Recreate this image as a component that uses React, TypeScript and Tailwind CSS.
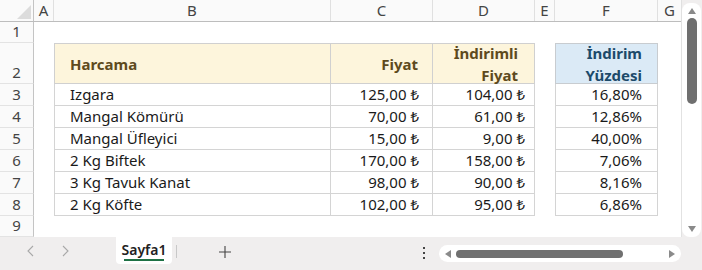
import React from 'react'

const font = { fontFamily: '"Noto Sans", "Open Sans", sans-serif' }

const rows = [
  ['Izgara', '125,00 ₺', '104,00 ₺', '16,80%'],
  ['Mangal Kömürü', '70,00 ₺', '61,00 ₺', '12,86%'],
  ['Mangal Üfleyici', '15,00 ₺', '9,00 ₺', '40,00%'],
  ['2 Kg Biftek', '170,00 ₺', '158,00 ₺', '7,06%'],
  ['3 Kg Tavuk Kanat', '98,00 ₺', '90,00 ₺', '8,16%'],
  ['2 Kg Köfte', '102,00 ₺', '95,00 ₺', '6,86%'],
]

function RowHead({ n, h }: { n: number; h: string }) {
  return (
    <div className={`${h} w-[34px] shrink-0 flex items-end justify-center pb-[1px] border-r border-b border-r-[#c4c4c4] border-b-[#e3e3e3] bg-[#fafafa] text-[#444] text-[15px] leading-[20px]`}>
      {n}
    </div>
  )
}

function ColHead() {
  const cols: [string, string][] = [
    ['A', 'w-[20px]'],
    ['B', 'w-[277px]'],
    ['C', 'w-[102px]'],
    ['D', 'w-[102px]'],
    ['E', 'w-[20px]'],
    ['F', 'w-[103px]'],
    ['G', 'w-[24px]'],
  ]
  return (
    <div className="flex h-[22px] border-b border-[#bdbdbd] bg-[#fafafa]">
      <div className="w-[34px] shrink-0 border-r border-[#c4c4c4] relative">
        <svg width="34" height="21" className="absolute left-0 top-0">
          <polygon points="31,5 31,19 17,19" fill="#dcdcdc" />
        </svg>
      </div>
      {cols.map(([l, w]) => (
        <div key={l} className={`${w} shrink-0 border-r border-[#e0e0e0] flex items-center justify-center text-[15px] text-[#444]`}>
          {l}
        </div>
      ))}
    </div>
  )
}

export default function App() {
  return (
    <div className="w-[702px] h-[270px] bg-[#f0eeee] flex flex-col overflow-hidden" style={font}>
      <div className="flex h-[237px]">
        {/* Grid */}
        <div className="w-[682px] bg-white flex flex-col border-r border-[#e2e2e2]">
          <ColHead />
          {/* Row 1 */}
          <div className="flex h-[21px]">
            <RowHead n={1} h="h-[21px]" />
          </div>
          {/* Row 2 header */}
          <div className="flex h-[41px]">
            <RowHead n={2} h="h-[41px]" />
            <div className="w-[20px] shrink-0" />
            <div className="w-[277px] shrink-0 border border-[#d0d0d0] bg-[#fdf5dc] flex items-center pl-[15px] pt-[1px] font-bold text-[15px] text-[#5e4a1d]">
              Harcama
            </div>
            <div className="w-[102px] shrink-0 border-y border-r border-[#d0d0d0] bg-[#fdf5dc] flex items-center justify-end pr-[14px] pt-[1px] font-bold text-[15px] text-[#5e4a1d]">
              Fiyat
            </div>
            <div className="w-[102px] shrink-0 border-y border-r border-[#d0d0d0] bg-[#fdf5dc] flex flex-col items-end justify-center pr-[16px] pt-[1px] font-bold text-[15px] leading-[22px] text-[#5e4a1d]">
              <span>İndirimli</span>
              <span>Fiyat</span>
            </div>
            <div className="w-[20px] shrink-0" />
            <div className="w-[103px] shrink-0 border border-[#c8ccd0] bg-[#dbeaf6] flex flex-col items-end justify-center pr-[15px] pt-[1px] font-bold text-[15px] leading-[22px] text-[#1d4a6a]">
              <span>İndirim</span>
              <span>Yüzdesi</span>
            </div>
          </div>
          {rows.map((r, i) => (
            <div key={i} className="flex h-[22px] text-[15px] text-[#1a1a1a]">
              <RowHead n={i + 3} h="h-[22px]" />
              <div className="w-[20px] shrink-0" />
              <div className="w-[277px] shrink-0 border-x border-b border-[#d4d4d4] flex items-center pl-[15px]">{r[0]}</div>
              <div className="w-[102px] shrink-0 border-r border-b border-[#d4d4d4] flex items-center justify-end pr-[13px]">{r[1]}</div>
              <div className="w-[102px] shrink-0 border-r border-b border-[#d4d4d4] flex items-center justify-end pr-[9px]">{r[2]}</div>
              <div className="w-[20px] shrink-0" />
              <div className="w-[103px] shrink-0 border-x border-b border-[#d4d4d4] flex items-center justify-end pr-[15px]">{r[3]}</div>
            </div>
          ))}
          {/* Row 9 */}
          <div className="flex h-[21px]">
            <RowHead n={9} h="h-[21px]" />
          </div>
        </div>
        {/* Vertical scrollbar */}
        <div className="w-[20px] pt-[3px] pr-[1px]">
          <div className="h-full bg-white rounded-[8px] flex flex-col items-center">
            <svg width="10" height="8" className="mt-[4px]">
              <polygon points="5,1 9,7 1,7" fill="#8a8a8a" />
            </svg>
            <div className="w-[10px] h-[86px] mt-[3px] rounded-full bg-[#6f6f6f]" />
            <div className="flex-1" />
            <svg width="10" height="8" className="mb-[4px]">
              <polygon points="1,1 9,1 5,7" fill="#8a8a8a" />
            </svg>
          </div>
        </div>
      </div>
      {/* Tab bar */}
      <div className="h-[33px] flex items-start">
        <div className="w-[116px] h-[27px] flex items-center">
          <span className="ml-[27px]">
            <svg width="8" height="12"><polyline points="6,1 1,6 6,11" fill="none" stroke="#a8a8a8" strokeWidth="1.1" /></svg>
          </span>
          <span className="ml-[26px]">
            <svg width="8" height="12"><polyline points="2,1 7,6 2,11" fill="none" stroke="#a8a8a8" strokeWidth="1.1" /></svg>
          </span>
        </div>
        <div className="w-[56px] h-[27px] bg-white rounded-b-[4px] flex flex-col items-center justify-center relative">
          <span className="text-[14px] font-semibold text-[#222] leading-[18px] -mt-[2px]">Sayfa1</span>
          <div className="absolute bottom-[3px] w-[40px] h-[2px] bg-[#1e7145]" />
        </div>
        <div className="w-[1px] h-[13px] bg-[#c8c8c8] mt-[8px] ml-[4px]" />
        <div className="ml-[41px] mt-[8px]">
          <svg width="14" height="14"><path d="M7 1v12M1 7h12" stroke="#444" strokeWidth="1.1" /></svg>
        </div>
        <div className="ml-[191px] mt-[10px] flex flex-col gap-[3px]">
          <div className="w-[2px] h-[2px] bg-[#444]" />
          <div className="w-[2px] h-[2px] bg-[#444]" />
          <div className="w-[2px] h-[2px] bg-[#444]" />
        </div>
        <div className="ml-[14px] mt-[8px] w-[242px] h-[17px] bg-white rounded-full flex items-center px-[5px]">
          <svg width="8" height="10"><polygon points="7,1 7,9 1,5" fill="#8a8a8a" /></svg>
          <div className="ml-[4px] w-[167px] h-[8px] rounded-full bg-[#707070]" />
          <div className="flex-1" />
          <svg width="8" height="10"><polygon points="1,1 1,9 7,5" fill="#8a8a8a" /></svg>
        </div>
      </div>
    </div>
  )
}
